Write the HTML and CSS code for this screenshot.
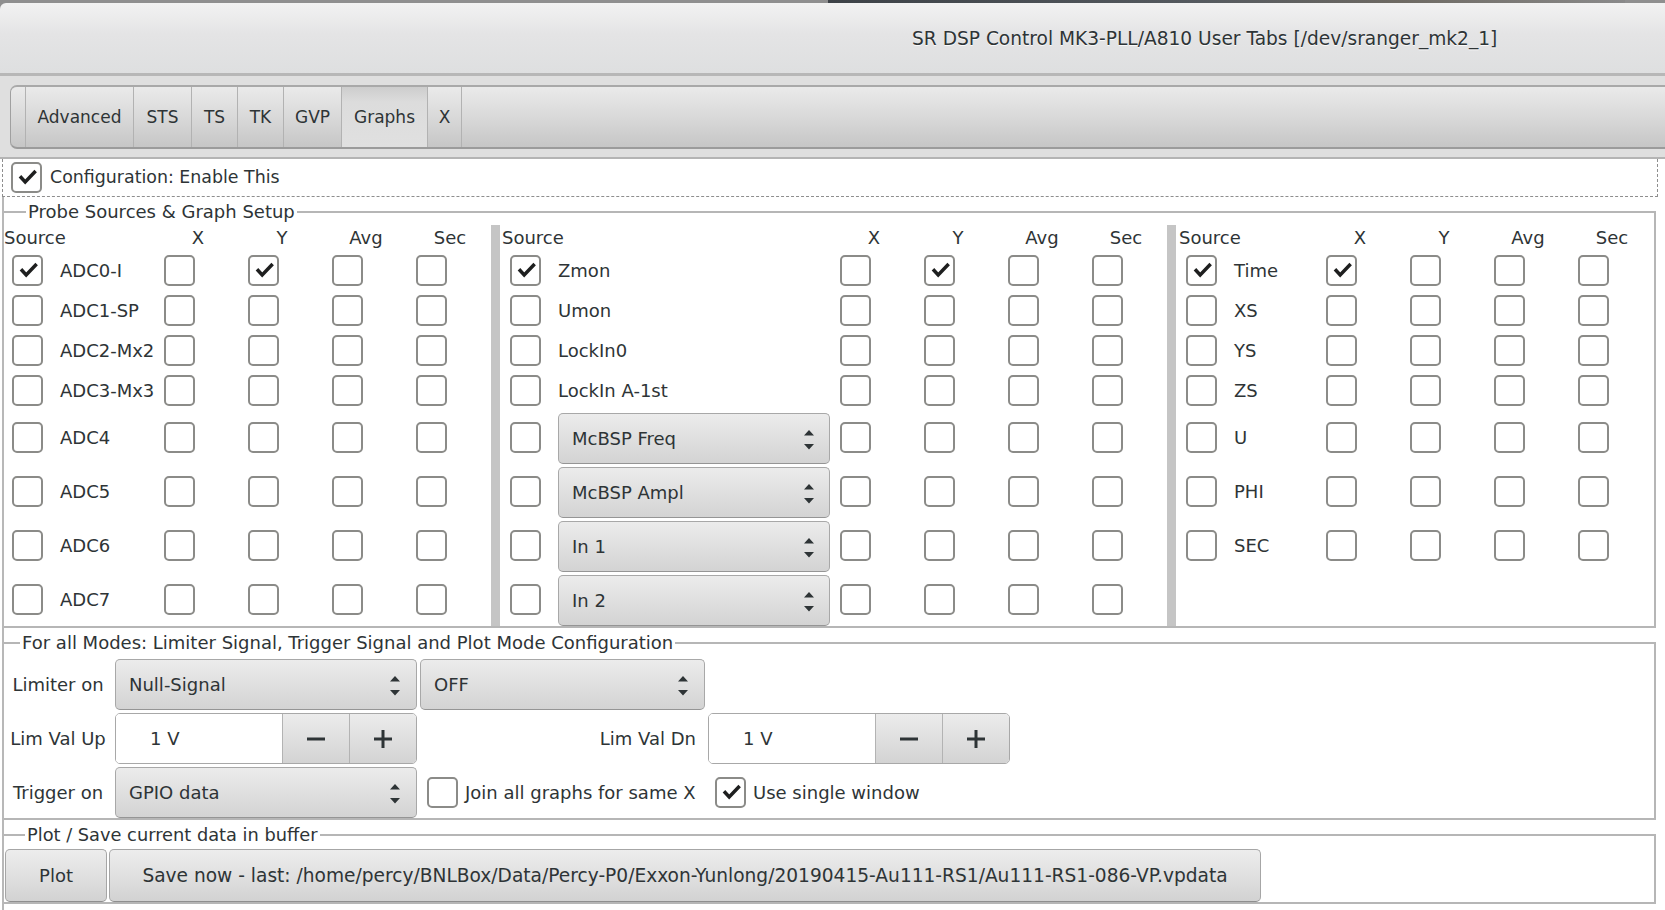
FILE: index.html
```html
<!DOCTYPE html>
<html>
<head>
<meta charset="utf-8">
<title>SR DSP Control</title>
<link rel="stylesheet" href="styles.css">
</head>
<body>
<div class="chrome">
  <div class="topline"></div>
  <header class="titlebar"><span class="title">SR DSP Control MK3-PLL/A810 User Tabs [/dev/sranger_mk2_1]</span></header>
</div>
<div class="nbhead">
  <nav class="tabbar">
    <div class="tab cap"></div>
    <div class="tab w-adv">Advanced</div>
    <div class="tab w-sts">STS</div>
    <div class="tab w-ts">TS</div>
    <div class="tab w-tk">TK</div>
    <div class="tab w-gvp">GVP</div>
    <div class="tab w-graphs active">Graphs</div>
    <div class="tab w-x">X</div>
  </nav>
</div>
<div class="config">
  <span class="cb"><svg viewBox="0 0 31 31"><path d="M8 14 L14 20.5 L26 8"/></svg></span>
  <span>Configuration: Enable This</span>
</div>
<div class="frames">
  <fieldset class="frame probe">
    <legend class="lg-probe">Probe Sources &amp; Graph Setup</legend>
    <div class="groups">
      <div class="grid g1">
        <span class="hd src">Source</span><span class="hd">X</span><span class="hd">Y</span><span class="hd">Avg</span><span class="hd">Sec</span>

        <span class="cb c1"><svg viewBox="0 0 31 31"><path d="M8 14 L14 20.5 L26 8"/></svg></span><span class="lbl">ADC0-I</span><span class="cb"></span><span class="cb"><svg viewBox="0 0 31 31"><path d="M8 14 L14 20.5 L26 8"/></svg></span><span class="cb"></span><span class="cb"></span>
        <span class="cb c1"></span><span class="lbl">ADC1-SP</span><span class="cb"></span><span class="cb"></span><span class="cb"></span><span class="cb"></span>
        <span class="cb c1"></span><span class="lbl">ADC2-Mx2</span><span class="cb"></span><span class="cb"></span><span class="cb"></span><span class="cb"></span>
        <span class="cb c1"></span><span class="lbl">ADC3-Mx3</span><span class="cb"></span><span class="cb"></span><span class="cb"></span><span class="cb"></span>
        <span class="cb c1"></span><span class="lbl">ADC4</span><span class="cb"></span><span class="cb"></span><span class="cb"></span><span class="cb"></span>
        <span class="cb c1"></span><span class="lbl">ADC5</span><span class="cb"></span><span class="cb"></span><span class="cb"></span><span class="cb"></span>
        <span class="cb c1"></span><span class="lbl">ADC6</span><span class="cb"></span><span class="cb"></span><span class="cb"></span><span class="cb"></span>
        <span class="cb c1"></span><span class="lbl">ADC7</span><span class="cb"></span><span class="cb"></span><span class="cb"></span><span class="cb"></span>
      </div>
      <div class="sep"></div>
      <div class="grid g2">
        <span class="hd src">Source</span><span class="hd">X</span><span class="hd">Y</span><span class="hd">Avg</span><span class="hd">Sec</span>

        <span class="cb c1"><svg viewBox="0 0 31 31"><path d="M8 14 L14 20.5 L26 8"/></svg></span><span class="lbl">Zmon</span><span class="cb"></span><span class="cb"><svg viewBox="0 0 31 31"><path d="M8 14 L14 20.5 L26 8"/></svg></span><span class="cb"></span><span class="cb"></span>
        <span class="cb c1"></span><span class="lbl">Umon</span><span class="cb"></span><span class="cb"></span><span class="cb"></span><span class="cb"></span>
        <span class="cb c1"></span><span class="lbl">LockIn0</span><span class="cb"></span><span class="cb"></span><span class="cb"></span><span class="cb"></span>
        <span class="cb c1"></span><span class="lbl">LockIn A-1st</span><span class="cb"></span><span class="cb"></span><span class="cb"></span><span class="cb"></span>
        <span class="cb c1"></span><div class="combo mid"><span>McBSP Freq</span><svg class="arr" viewBox="0 0 10 19.5"><path d="M0 5.5 L5 0 L10 5.5Z M0 14 L10 14 L5 19.5Z"/></svg></div><span class="cb"></span><span class="cb"></span><span class="cb"></span><span class="cb"></span>
        <span class="cb c1"></span><div class="combo mid"><span>McBSP Ampl</span><svg class="arr" viewBox="0 0 10 19.5"><path d="M0 5.5 L5 0 L10 5.5Z M0 14 L10 14 L5 19.5Z"/></svg></div><span class="cb"></span><span class="cb"></span><span class="cb"></span><span class="cb"></span>
        <span class="cb c1"></span><div class="combo mid"><span>In 1</span><svg class="arr" viewBox="0 0 10 19.5"><path d="M0 5.5 L5 0 L10 5.5Z M0 14 L10 14 L5 19.5Z"/></svg></div><span class="cb"></span><span class="cb"></span><span class="cb"></span><span class="cb"></span>
        <span class="cb c1"></span><div class="combo mid"><span>In 2</span><svg class="arr" viewBox="0 0 10 19.5"><path d="M0 5.5 L5 0 L10 5.5Z M0 14 L10 14 L5 19.5Z"/></svg></div><span class="cb"></span><span class="cb"></span><span class="cb"></span><span class="cb"></span>
      </div>
      <div class="sep"></div>
      <div class="grid g3">
        <span class="hd src">Source</span><span class="hd">X</span><span class="hd">Y</span><span class="hd">Avg</span><span class="hd">Sec</span>

        <span class="cb c1"><svg viewBox="0 0 31 31"><path d="M8 14 L14 20.5 L26 8"/></svg></span><span class="lbl">Time</span><span class="cb"><svg viewBox="0 0 31 31"><path d="M8 14 L14 20.5 L26 8"/></svg></span><span class="cb"></span><span class="cb"></span><span class="cb"></span>
        <span class="cb c1"></span><span class="lbl">XS</span><span class="cb"></span><span class="cb"></span><span class="cb"></span><span class="cb"></span>
        <span class="cb c1"></span><span class="lbl">YS</span><span class="cb"></span><span class="cb"></span><span class="cb"></span><span class="cb"></span>
        <span class="cb c1"></span><span class="lbl">ZS</span><span class="cb"></span><span class="cb"></span><span class="cb"></span><span class="cb"></span>
        <span class="cb c1"></span><span class="lbl">U</span><span class="cb"></span><span class="cb"></span><span class="cb"></span><span class="cb"></span>
        <span class="cb c1"></span><span class="lbl">PHI</span><span class="cb"></span><span class="cb"></span><span class="cb"></span><span class="cb"></span>
        <span class="cb c1"></span><span class="lbl">SEC</span><span class="cb"></span><span class="cb"></span><span class="cb"></span><span class="cb"></span>
      </div>
    </div>
  </fieldset>

  <fieldset class="frame modes">
    <legend class="lg-modes">For all Modes: Limiter Signal, Trigger Signal and Plot Mode Configuration</legend>
    <div class="mgrid">
      <span class="rlbl">Limiter on</span>
      <div class="combo"><span>Null-Signal</span><svg class="arr" viewBox="0 0 10 19.5"><path d="M0 5.5 L5 0 L10 5.5Z M0 14 L10 14 L5 19.5Z"/></svg></div>
      <div class="combo"><span>OFF</span><svg class="arr" viewBox="0 0 10 19.5"><path d="M0 5.5 L5 0 L10 5.5Z M0 14 L10 14 L5 19.5Z"/></svg></div>
      <span></span>

      <span class="rlbl">Lim Val Up</span>
      <div class="spin"><span class="entry">1 V</span><span class="sbtn"><svg viewBox="0 0 18 18"><rect x="0" y="7.5" width="18" height="3"/></svg></span><span class="sbtn"><svg viewBox="0 0 18 18"><rect x="0" y="7.5" width="18" height="3"/><rect x="7.5" y="0" width="3" height="18"/></svg></span></div>
      <span class="rlbl right">Lim Val Dn</span>
      <div class="spin"><span class="entry">1 V</span><span class="sbtn"><svg viewBox="0 0 18 18"><rect x="0" y="7.5" width="18" height="3"/></svg></span><span class="sbtn"><svg viewBox="0 0 18 18"><rect x="0" y="7.5" width="18" height="3"/><rect x="7.5" y="0" width="3" height="18"/></svg></span></div>

      <span class="rlbl">Trigger on</span>
      <div class="combo"><span>GPIO data</span><svg class="arr" viewBox="0 0 10 19.5"><path d="M0 5.5 L5 0 L10 5.5Z M0 14 L10 14 L5 19.5Z"/></svg></div>
      <label class="chk"><span class="cb"></span><span>Join all graphs for same X</span></label>
      <label class="chk"><span class="cb"><svg viewBox="0 0 31 31"><path d="M8 14 L14 20.5 L26 8"/></svg></span><span>Use single window</span></label>
    </div>
  </fieldset>

  <fieldset class="frame plot">
    <legend class="lg-plot">Plot / Save current data in buffer</legend>
    <div class="btnrow">
      <button class="btn b-plot">Plot</button>
      <button class="btn b-save">Save now - last: /home/percy/BNLBox/Data/Percy-P0/Exxon-Yunlong/20190415-Au111-RS1/Au111-RS1-086-VP.vpdata</button>
    </div>
  </fieldset>
</div>
</body>
</html>
```

FILE: styles.css
```css
* { box-sizing: border-box; }
html, body { margin: 0; padding: 0; }
body {
  width: 1665px;
  height: 910px;
  overflow: hidden;
  background: #ffffff;
  font-family: "DejaVu Sans", "Liberation Sans", sans-serif;
  font-size: 18px;
  color: #2e3436;
  display: flex;
  flex-direction: column;
}

/* window chrome */
.chrome { background: #8f8f8f; }
.topline {
  height: 3px;
  background: linear-gradient(to right, #8f8f8f 0, #8f8f8f 828px, #3d4247 828px, #555a5f 1200px, #6e6a63 1400px, #8a8a8a 1625px, #8f8f8f 1625px);
}
.titlebar {
  height: 73px;
  border-bottom: 3px solid #b7b7b7;
  border-radius: 6px 0 0 0;
  background: linear-gradient(to bottom, #f2f2f2, #e4e4e5 45%, #dedfe0);
  display: flex;
  align-items: center;
  padding-left: 912px;
}
.title {
  font-size: 18.6px;
  white-space: nowrap;
  text-shadow: 0 1px rgba(255, 255, 255, 0.85);
}

/* notebook header */
.nbhead {
  background: #dfdfdf;
  padding-top: 9px;
  padding-bottom: 8px;
  border-bottom: 2px solid #b4b4b4;
}
.tabbar {
  display: flex;
  height: 64px;
  margin-left: 10px;
  margin-right: -20px;
  border-top: 2px solid #a9a9a9;
  border-bottom: 2px solid #9b9b9b;
  border-left: 1px solid #a0a0a0;
  border-radius: 7px 0 0 7px;
  background: linear-gradient(to bottom, #eaeaea, #d9d9d9 50%, #c6c6c6);
}
.tab {
  display: flex;
  align-items: center;
  justify-content: center;
  border-right: 1px solid #b2b2b2;
  font-size: 17px;
  white-space: nowrap;
}
.tab.cap { width: 15px; }
.w-adv { width: 108px; }
.w-sts { width: 58px; }
.w-ts { width: 46px; }
.w-tk { width: 46px; }
.w-gvp { width: 58px; }
.w-graphs { width: 86px; }
.w-x { width: 34px; }
.tab.active { background: linear-gradient(to bottom, #cdcdcd, #dcdcdc 25%, #e0e0e0); }

/* checkbox */
.cb {
  display: inline-block;
  flex: none;
  width: 31px;
  height: 31px;
  border: 2px solid #8b8b88;
  border-radius: 5px;
  background: #ffffff;
}
.cb svg { display: block; width: 27px; height: 27px; margin: 0; }
.cb svg path { fill: none; stroke: #1e1f1f; stroke-width: 4; stroke-linejoin: miter; }

/* config row */
.config {
  height: 38px;
  margin-left: 2px;
  width: 1656px;
  border: 1px dashed #8e8e8e;
  border-top: none;
  display: flex;
  align-items: center;
  gap: 8px;
  padding-left: 8px;
  padding-bottom: 1px;
  font-size: 17.4px;
  flex: none;
}

/* frames */
.frames {
  flex: 1;
  margin-left: 2px;
  width: 1654px;
  border-left: 2px solid #b8b8b8;
  display: flex;
  flex-direction: column;
}
.frame {
  margin: 3px 0 0 0;
  padding: 0;
  min-width: 0;
  border: 2px solid #b6b6b6;
  border-left: none;
}
.frame legend {
  line-height: 24px;
  padding: 0 2px;
  margin-left: 22px;
  font-size: 18px;
  white-space: nowrap;
}
.frame legend.lg-modes { margin-left: 16px; }
.frame legend.lg-plot { margin-left: 21px; font-size: 17.8px; }

/* probe groups */
.groups { display: flex; padding-top: 1px; }
.sep { width: 9px; flex: none; background: #c5c5c5; }
.grid {
  display: grid;
  grid-template-rows: 25px 40px 40px 40px 40px 54px 54px 54px 54px;
  align-items: center;
}
.g1 { width: 487px; grid-template-columns: 56px 104px 84px 84px 84px 75px; }
.g2 { width: 667px; grid-template-columns: 58px 282px 84px 84px 84px 75px; }
.g3 { flex: 1; grid-template-columns: 58px 92px 84px 84px 84px 1fr; }
.grid .cb { justify-self: start; }
.g1 .c1 { margin-left: 8px; }
.g2 .c1 { margin-left: 10px; }
.g3 .c1 { margin-left: 10px; }
.hd { width: 68px; text-align: center; line-height: 25px; }
.hd.src { grid-column: span 2; width: auto; text-align: left; }
.g2 .hd.src { padding-left: 2px; }
.g3 .hd.src { padding-left: 3px; }
.lbl { white-space: nowrap; }

/* combo box */
.combo {
  display: flex;
  align-items: center;
  justify-content: space-between;
  height: 51px;
  padding: 0 16px 0 13px;
  border: 1px solid #a8a8a8;
  border-bottom-color: #959595;
  border-radius: 5px;
  background: linear-gradient(to bottom, #ececec, #dedede 55%, #d3d3d3);
  white-space: nowrap;
}
.combo.mid { width: 272px; align-self: end; padding-right: 15px; }
.arr { width: 10px; height: 19.5px; margin-top: 3px; flex: none; }
.arr path { fill: #2e3436; }

/* modes grid */
.mgrid {
  display: grid;
  grid-template-columns: 108px 302px 285px 302px;
  grid-template-rows: 51px 51px 51px;
  column-gap: 3px;
  row-gap: 3px;
  padding-top: 4px;
  align-items: center;
}
.rlbl { text-align: center; white-space: nowrap; }
.rlbl.right { text-align: right; padding-right: 9px; }
.spin {
  display: flex;
  height: 51px;
  border: 1px solid #a8a8a8;
  border-radius: 5px;
  overflow: hidden;
}
.entry {
  flex: 1;
  display: flex;
  align-items: center;
  padding-left: 34px;
  background: #ffffff;
}
.sbtn {
  width: 67px;
  flex: none;
  display: flex;
  align-items: center;
  justify-content: center;
  border-left: 1px solid #b3b3b3;
  background: linear-gradient(to bottom, #ececec, #dedede 55%, #d3d3d3);
}
.sbtn svg { width: 18px; height: 18px; }
.sbtn svg rect { fill: #2e3436; }
.chk {
  display: flex;
  align-items: center;
  gap: 7px;
  padding-left: 7px;
  white-space: nowrap;
}

/* plot buttons */
.btnrow {
  display: flex;
  gap: 2px;
  padding: 2px 0 0 1px;
}
.btn {
  height: 53px;
  font-family: "DejaVu Sans", "Liberation Sans", sans-serif;
  font-size: 18px;
  color: #2e3436;
  border: 1px solid #a6a6a6;
  border-bottom-color: #8f8f8f;
  border-radius: 5px;
  background: linear-gradient(to bottom, #ededed, #dfdfdf 55%, #d2d2d2);
  padding: 0;
  white-space: nowrap;
}
.b-plot { width: 102px; }
.b-save { width: 1152px; font-size: 18.6px; }
```
